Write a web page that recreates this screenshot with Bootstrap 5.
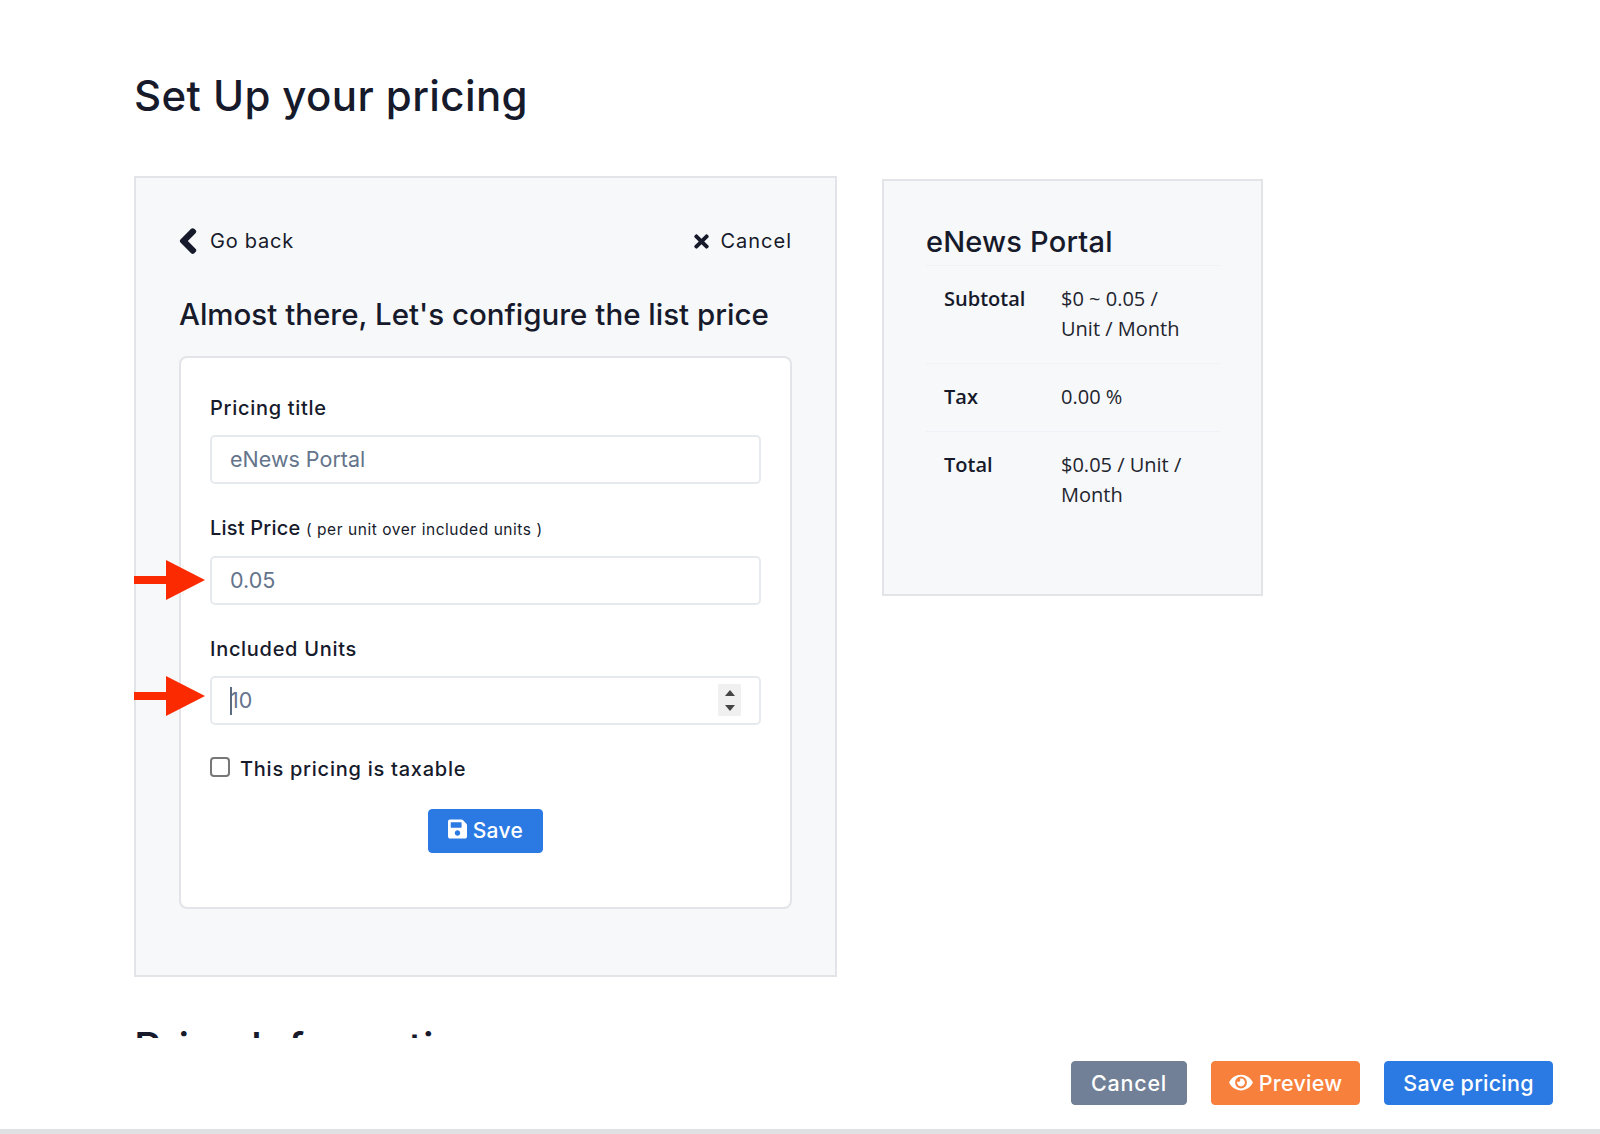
<!DOCTYPE html>
<html lang="en">
<head>
  <meta charset="UTF-8">
  <meta name="viewport" content="width=device-width, initial-scale=1.0">
  <link rel="stylesheet" href="https://cdn.jsdelivr.net/npm/bootstrap@5.3.0/dist/css/bootstrap.min.css">
  <title>Set Up your pricing</title>
  <style>
    html, body { height: 100%; overflow: hidden; }
    body { font-family: Inter, "Liberation Sans", sans-serif; color: #161a2b; background: #fff; }
    .page-shell { height: 1134px; display: flex; flex-direction: column; }
    .page-main { height: 1038px; overflow: hidden; padding: 67px 0 0 134px; }
    .page-title { font-size: 42px; font-weight: 500; letter-spacing: .4px; line-height: 58px; margin-bottom: 51px; }
    .page-columns { gap: 45px; }
    .next-title { margin-top: 42px; }
    .config-panel { width: 703px; height: 801px; background: #f7f8fa; border: 2px solid #e2e4e7; padding: 48px 43px 0; position: relative; }
    .back-row { font-size: 20px; letter-spacing: .75px; line-height: 30px; margin-bottom: 36px; }
    .back-row svg { fill: #161a2b; }
    .back-text { margin-left: 13px; }
    .cancel-text { margin-left: 11px; letter-spacing: 1px; }
    .config-title { font-size: 29.5px; font-weight: 500; line-height: 44px; margin-bottom: 20px; }
    .form-box { background: #fff; border: 2px solid #e2e4e7; border-radius: 8px; height: 553px; padding: 36px 29px 0; }
    .field-label { font-size: 20px; font-weight: 500; letter-spacing: .7px; line-height: 28px; margin-bottom: 13px; display: block; }
    .field-label.price-label { letter-spacing: .2px; margin-bottom: 12px; }
    .field-label small { font-size: 15.5px; font-weight: 400; letter-spacing: .55px; margin-left: 0; }
    .field-input { height: 49px; font-size: 21.5px; color: #64748b; border: 2px solid #e6e9ed; border-radius: 5px; padding: 0 18px 2px; margin-bottom: 30px; }
    .field-wrap { position: relative; }
    .spin-box { position: absolute; right: 20px; top: 8px; width: 23px; height: 32px; background: #f0f0f0; display: flex; flex-direction: column; align-items: center; justify-content: center; gap: 9px; }
    .spin-up { border: 5px solid transparent; border-top: 0; border-bottom: 6px solid #444; }
    .spin-down { border: 5px solid transparent; border-bottom: 0; border-top: 6px solid #444; }
    .caret-bar { position: absolute; left: 20px; top: 11px; width: 2px; height: 28px; background: #5b6b80; }
    .tax-check { margin-top: -1px; font-size: 20px; font-weight: 500; letter-spacing: .75px; line-height: 30px; }
    .tax-check .form-check-input { width: 20px; height: 20px; margin: -4px 10px 0 0; border: 2px solid #777; border-radius: 4px; }
    .save-wrap { margin-top: 25px; }
    .save-btn { background: #2b7ae4; border-color: #2b7ae4; color: #fff; width: 115px; height: 44px; font-size: 21px; font-weight: 500; letter-spacing: .3px; line-height: 30px; padding: 5px 0; border-radius: 4px; }
    .save-btn svg, .preview-btn svg { fill: #fff; vertical-align: -2px; }
    .pointer-arrow { position: absolute; left: -2px; width: 71px; height: 40px; }
    .summary-panel { width: 381px; height: 417px; margin-top: 3px; background: #f7f8fa; border: 2px solid #e2e4e7; padding: 41px 42px 0; font-family: "Open Sans", "Liberation Sans", sans-serif; }
    .summary-title { font-family: Inter, "Liberation Sans", sans-serif; font-size: 29px; font-weight: 500; letter-spacing: .2px; line-height: 40px; padding-bottom: 3px; border-bottom: 1px solid #eef1f6; }
    .summary-row { display: flex; font-size: 20px; line-height: 30px; padding: 18px 34px 19px 18px; border-bottom: 1px solid #eef1f6; color: #22252e; }
    .summary-row:last-child { border-bottom: 0; }
    .summary-key { width: 117px; flex: none; font-weight: 600; color: #161a2b; }
    .page-foot { height: 91px; padding: 23px 47px 0 0; gap: 24px; }
    .foot-btn { height: 44px; font-size: 21.5px; font-weight: 500; letter-spacing: .25px; line-height: 30px; border-radius: 4px; color: #fff; padding: 6px 0; white-space: nowrap; }
    .cancel-btn { background: #718096; border-color: #718096; width: 116px; letter-spacing: .8px; }
    .preview-btn { background: #f6803c; border-color: #f6803c; width: 149px; }
    .store-btn { background: #2b7ae4; border-color: #2b7ae4; width: 169px; }
    .foot-line { height: 5px; background: #e0e1e3; }
  </style>
</head>
<body>
  <div class="page-shell">
    <div class="page-main">
      <h1 class="page-title">Set Up your pricing</h1>
      <div class="d-flex align-items-start page-columns">
        <div class="config-panel flex-shrink-0">
          <div class="back-row d-flex justify-content-between align-items-center">
            <div class="d-flex align-items-center">
              <svg width="18" height="28" viewBox="0 0 320 512"><path stroke="#161a2b" stroke-width="34" stroke-linejoin="round" d="M34.52 239.03L228.87 44.69c9.37-9.37 24.57-9.37 33.94 0l22.67 22.67c9.36 9.36 9.37 24.52.04 33.9L131.49 256l154.02 154.75c9.34 9.38 9.32 24.54-.04 33.9l-22.67 22.67c-9.37 9.37-24.57 9.37-33.94 0L34.52 272.97c-9.37-9.37-9.37-24.57 0-33.94z"/></svg>
              <span class="back-text">Go back</span>
            </div>
            <div class="d-flex align-items-center">
              <svg width="15" height="21" viewBox="0 0 352 512"><path d="M242.72 256l100.07-100.07c12.28-12.28 12.28-32.19 0-44.48l-22.24-22.24c-12.28-12.28-32.19-12.28-44.48 0L176 189.28 75.93 89.21c-12.28-12.28-32.19-12.28-44.48 0L9.21 111.45c-12.28 12.28-12.28 32.19 0 44.48L109.28 256 9.21 356.07c-12.28 12.28-12.28 32.19 0 44.48l22.24 22.24c12.28 12.28 32.2 12.28 44.48 0L176 322.72l100.07 100.07c12.28 12.28 32.2 12.28 44.48 0l22.24-22.24c12.28-12.28 12.28-32.19 0-44.48L242.72 256z"/></svg>
              <span class="cancel-text">Cancel</span>
            </div>
          </div>
          <h2 class="config-title">Almost there, Let's configure the list price</h2>
          <div class="form-box">
            <label class="field-label">Pricing title</label>
            <input type="text" class="form-control field-input" value="eNews Portal">
            <label class="field-label price-label">List Price <small>( per unit over included units )</small></label>
            <input type="text" class="form-control field-input" value="0.05">
            <label class="field-label">Included Units</label>
            <div class="field-wrap">
              <input type="text" class="form-control field-input" value="10">
              <span class="caret-bar"></span>
              <span class="spin-box"><span class="spin-up"></span><span class="spin-down"></span></span>
            </div>
            <div class="tax-check d-flex align-items-center">
              <input type="checkbox" class="form-check-input">
              <span>This pricing is taxable</span>
            </div>
            <div class="text-center save-wrap">
              <button class="btn save-btn">
                <svg width="19" height="22" viewBox="0 0 448 512"><path d="M433.941 129.941l-83.882-83.882A48 48 0 0 0 316.118 32H48C21.49 32 0 53.49 0 80v352c0 26.51 21.49 48 48 48h352c26.51 0 48-21.49 48-48V163.882a48 48 0 0 0-14.059-33.941zM224 416c-35.346 0-64-28.654-64-64 0-35.346 28.654-64 64-64s64 28.654 64 64c0 35.346-28.654 64-64 64zm96-304.52V212c0 6.627-5.373 12-12 12H76c-6.627 0-12-5.373-12-12V108c0-6.627 5.373-12 12-12h228.52c3.183 0 6.235 1.264 8.485 3.515l3.48 3.48A11.996 11.996 0 0 1 320 111.48z"/></svg>
                Save
              </button>
            </div>
          </div>
          <svg class="pointer-arrow" style="top: 382px" viewBox="0 0 71 40"><path fill="#fb2a00" d="M0 16H32V0L71 20 32 40V24H0z"/></svg>
          <svg class="pointer-arrow" style="top: 498px" viewBox="0 0 71 40"><path fill="#fb2a00" d="M0 16H32V0L71 20 32 40V24H0z"/></svg>
        </div>
        <div class="summary-panel flex-shrink-0">
          <div class="summary-title">eNews Portal</div>
          <div class="summary-row"><div class="summary-key">Subtotal</div><div>$0 ~ 0.05 / Unit / Month</div></div>
          <div class="summary-row"><div class="summary-key">Tax</div><div>0.00 %</div></div>
          <div class="summary-row"><div class="summary-key">Total</div><div>$0.05 / Unit / Month</div></div>
        </div>
      </div>
      <h2 class="page-title next-title">Price Information</h2>
    </div>
    <div class="page-foot d-flex justify-content-end align-items-start">
      <button class="btn foot-btn cancel-btn">Cancel</button>
      <button class="btn foot-btn preview-btn">
        <svg width="24" height="21" viewBox="0 0 576 512"><path d="M572.52 241.4C518.29 135.59 410.93 64 288 64S57.68 135.64 3.48 241.41a32.35 32.35 0 0 0 0 29.19C57.71 376.41 165.07 448 288 448s230.32-71.64 284.52-177.41a32.35 32.35 0 0 0 0-29.19zM288 400a144 144 0 1 1 144-144 143.93 143.93 0 0 1-144 144zm0-240a95.31 95.31 0 0 0-25.31 3.79 47.85 47.85 0 0 1-66.9 66.9A95.78 95.78 0 1 0 288 160z"/></svg>
        Preview
      </button>
      <button class="btn foot-btn store-btn">Save pricing</button>
    </div>
    <div class="foot-line"></div>
  </div>
  <script src="https://cdn.jsdelivr.net/npm/bootstrap@5.3.0/dist/js/bootstrap.bundle.min.js"></script>
</body>
</html>
